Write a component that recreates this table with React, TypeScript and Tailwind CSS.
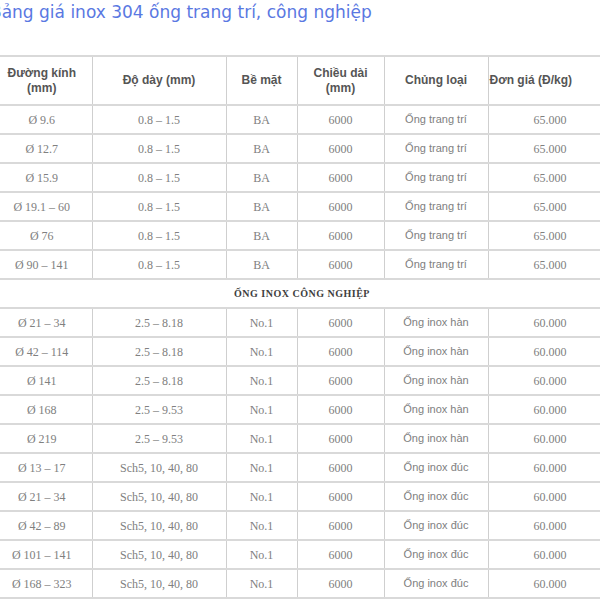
export default function App() {
  const trangTri = [
    ["Ø 9.6", "0.8 – 1.5"],
    ["Ø 12.7", "0.8 – 1.5"],
    ["Ø 15.9", "0.8 – 1.5"],
    ["Ø 19.1 – 60", "0.8 – 1.5"],
    ["Ø 76", "0.8 – 1.5"],
    ["Ø 90 – 141", "0.8 – 1.5"],
  ];
  const congNghiep = [
    ["Ø 21 – 34", "2.5 – 8.18", "Ống inox hàn"],
    ["Ø 42 – 114", "2.5 – 8.18", "Ống inox hàn"],
    ["Ø 141", "2.5 – 8.18", "Ống inox hàn"],
    ["Ø 168", "2.5 – 9.53", "Ống inox hàn"],
    ["Ø 219", "2.5 – 9.53", "Ống inox hàn"],
    ["Ø 13 – 17", "Sch5, 10, 40, 80", "Ống inox đúc"],
    ["Ø 21 – 34", "Sch5, 10, 40, 80", "Ống inox đúc"],
    ["Ø 42 – 89", "Sch5, 10, 40, 80", "Ống inox đúc"],
    ["Ø 101 – 141", "Sch5, 10, 40, 80", "Ống inox đúc"],
    ["Ø 168 – 323", "Sch5, 10, 40, 80", "Ống inox đúc"],
  ];

  const td = "border-b-2 border-r border-b-[#d9d9d9] border-r-[#cfcfcf] text-center p-0";
  const th = "border-b-2 border-r border-b-[#d9d9d9] border-r-[#cfcfcf] text-center p-0 font-bold text-[12px] leading-[15px] text-[#555] font-['Liberation_Sans',sans-serif]";

  return (
    <div className="w-[600px] h-[600px] overflow-hidden bg-white">
      <h2 className="h-[55px] ml-[-10px] pt-[1px] text-[17px] leading-[22px] text-[#5a78e2] font-['DejaVu_Sans',sans-serif] font-normal whitespace-nowrap">
        Bảng giá inox 304 ống trang trí, công nghiệp
      </h2>
      <table className="ml-[-8px] w-[620px] table-fixed border-collapse border-t-2 border-t-[#d9d9d9] font-['Liberation_Serif',serif] text-[12px] text-[#808080]">
        <colgroup>
          <col className="w-[100px]" />
          <col className="w-[134px]" />
          <col className="w-[71px]" />
          <col className="w-[87px]" />
          <col className="w-[104px]" />
          <col className="w-[124px]" />
        </colgroup>
        <thead>
          <tr className="h-[49px]">
            <th className={th}>Đường kính<br />(mm)</th>
            <th className={th}>Độ dày (mm)</th>
            <th className={th}>Bề mặt</th>
            <th className={th}>Chiều dài<br />(mm)</th>
            <th className={th}>Chủng loại</th>
            <th className={th + " !text-left pl-[1px] whitespace-nowrap"}>Đơn giá (Đ/kg)</th>
          </tr>
        </thead>
        <tbody>
          {trangTri.map((r, i) => (
            <tr key={"t" + i} className="h-[29px]">
              <td className={td}>{r[0]}</td>
              <td className={td}>{r[1]}</td>
              <td className={td}>BA</td>
              <td className={td}>6000</td>
              <td className={td + " font-['Liberation_Sans',sans-serif] text-[11px]"}>Ống trang trí</td>
              <td className={td}>65.000</td>
            </tr>
          ))}
          <tr className="h-[29px]">
            <td colSpan={6} className="border-b-2 border-b-[#d9d9d9] text-center font-bold text-[10px] text-[#404040] tracking-[0.5px] p-0">
              ỐNG INOX CÔNG NGHIỆP
            </td>
          </tr>
          {congNghiep.map((r, i) => (
            <tr key={"c" + i} className="h-[29px]">
              <td className={td}>{r[0]}</td>
              <td className={td}>{r[1]}</td>
              <td className={td}>No.1</td>
              <td className={td}>6000</td>
              <td className={td + " font-['Liberation_Sans',sans-serif] text-[11px]"}>{r[2]}</td>
              <td className={td}>60.000</td>
            </tr>
          ))}
        </tbody>
      </table>
    </div>
  );
}
